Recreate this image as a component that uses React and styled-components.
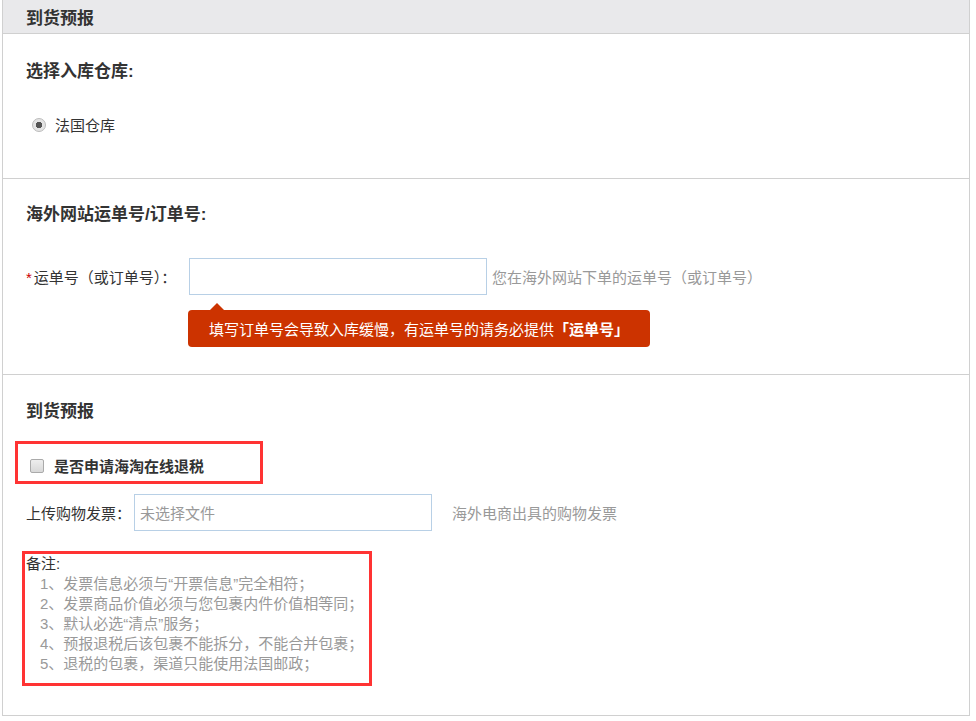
import React from 'react'
import styled, { createGlobalStyle } from 'styled-components'

const Global = createGlobalStyle`
  body {
    margin: 0;
    background: #fff;
    font-family: "Liberation Sans", "Noto Sans CJK SC", sans-serif;
    font-size: 15px;
    color: #333;
  }
`

const Panel = styled.div`
  margin-left: 2px;
  width: 966px;
  border-left: 1px solid #d0d0d0;
  border-right: 1px solid #d0d0d0;
`

const Header = styled.div`
  height: 33px;
  background: #e9e9eb;
  border-bottom: 1px solid #d0d0d0;
  padding-left: 23px;
  display: flex;
  align-items: center;
  font-size: 17px;
  font-weight: bold;
  color: #333;
`

const Section = styled.div`
  border-bottom: 1px solid #d0d0d0;
  padding: ${p => p.pad || '28px 23px 0'};
  height: ${p => p.h}px;
  box-sizing: border-box;
`

const Title = styled.div`
  font-size: 17px;
  font-weight: bold;
  color: #333;
  line-height: 22px;
  padding-left: ${p => p.pl || 0}px;
`

const RadioRow = styled.label`
  display: flex;
  align-items: center;
  gap: 9px;
  margin-top: 31px;
  padding-left: 6px;
  font-size: 15px;
  color: #333;
`

const Radio = styled.span`
  width: 14px;
  height: 14px;
  border-radius: 50%;
  border: 1px solid #bbb;
  background: radial-gradient(circle, #555 0 3px, #e4e4e4 3.5px);
  box-sizing: border-box;
`

const FormRow = styled.div`
  display: flex;
  align-items: center;
  margin-top: ${p => p.mt || 0}px;
  padding-left: ${p => p.pl || 0}px;
`

const Label = styled.span`
  width: ${p => p.w}px;
  font-size: 15px;
  color: #333;
  flex-shrink: 0;
  white-space: nowrap;
`

const Star = styled.span`
  color: #c00;
  margin-right: 2px;
`

const Input = styled.div`
  width: 298px;
  height: 37px;
  box-sizing: border-box;
  border: 1px solid #b8d0e6;
  display: flex;
  align-items: center;
  padding-left: 5px;
  font-size: 15px;
  color: #999;
`

const Hint = styled.span`
  margin-left: ${p => p.ml}px;
  font-size: 15px;
  color: #999;
`

const TipWrap = styled.div`
  position: relative;
  margin-left: 162px;
  margin-top: 15px;
  width: 462px;
`

const Tip = styled.div`
  background: #cc3300;
  border-radius: 4px;
  height: 37px;
  display: flex;
  align-items: center;
  padding-left: 21px;
  color: #fff;
  font-size: 15px;
  &::before {
    content: '';
    position: absolute;
    left: 22px;
    top: -7px;
    border-left: 7px solid transparent;
    border-right: 7px solid transparent;
    border-bottom: 7px solid #cc3300;
  }
  b { font-weight: bold; }
`

const Outline = styled.div`
  border: 3px solid #ff3333;
  box-sizing: border-box;
  width: ${p => p.w}px;
  height: ${p => p.h}px;
  margin-left: ${p => p.ml}px;
  margin-top: ${p => p.mt}px;
`

const CheckRow = styled.label`
  display: flex;
  align-items: center;
  gap: 10px;
  padding: 11px 0 0 12px;
  font-size: 15px;
  font-weight: bold;
  color: #333;
`

const Check = styled.span`
  width: 14px;
  height: 14px;
  border: 1px solid #aaa;
  border-radius: 2px;
  background: linear-gradient(#eee, #d8d8d8);
  box-sizing: border-box;
`

const Notes = styled.div`
  padding: 0 0 0 1px;
  font-size: 15px;
  line-height: 20px;
`

const NoteHead = styled.div`
  color: #333;
`

const NoteItem = styled.div`
  color: #999;
  padding-left: 14px;
`

const notes = [
  '1、发票信息必须与“开票信息”完全相符；',
  '2、发票商品价值必须与您包裹内件价值相等同；',
  '3、默认必选“清点”服务；',
  '4、预报退税后该包裹不能拆分，不能合并包裹；',
  '5、退税的包裹，渠道只能使用法国邮政；',
]

export default function App() {
  return (
    <>
      <Global />
      <Panel>
        <Header>到货预报</Header>
        <Section h={145} pad="27px 23px 0">
          <Title>选择入库仓库:</Title>
          <RadioRow>
            <Radio />
            法国仓库
          </RadioRow>
        </Section>
        <Section h={196} pad="25px 23px 0">
          <Title>海外网站运单号/订单号:</Title>
          <FormRow mt={32}>
            <Label w={163}><Star>*</Star>运单号（或订单号）：</Label>
            <Input />
            <Hint ml={5}>您在海外网站下单的运单号（或订单号）</Hint>
          </FormRow>
          <TipWrap>
            <Tip>填写订单号会导致入库缓慢，有运单号的请务必提供<b>「运单号」</b></Tip>
          </TipWrap>
        </Section>
        <Section h={341} pad="26px 0 0 0">
          <Title pl={23}>到货预报</Title>
          <Outline w={248} h={43} ml={12} mt={18}>
            <CheckRow>
              <Check />
              是否申请海淘在线退税
            </CheckRow>
          </Outline>
          <FormRow mt={10} pl={23}>
            <Label w={108}>上传购物发票：</Label>
            <Input>未选择文件</Input>
            <Hint ml={20}>海外电商出具的购物发票</Hint>
          </FormRow>
          <Outline w={350} h={135} ml={19} mt={20}>
            <Notes>
              <NoteHead>备注:</NoteHead>
              {notes.map(n => <NoteItem key={n}>{n}</NoteItem>)}
            </Notes>
          </Outline>
        </Section>
      </Panel>
    </>
  )
}
